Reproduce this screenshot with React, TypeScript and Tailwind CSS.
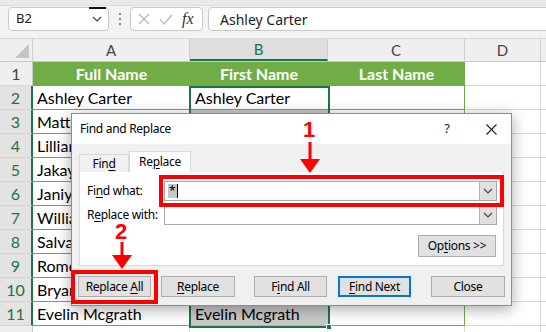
import React from "react";

const colW = [33, 157, 138, 137, 76, 5];

const names = [
  "Ashley Carter",
  "Matthew Hughes",
  "Lillian Brooks",
  "Jakayla Reed",
  "Janiya Flores",
  "William Ortiz",
  "Salvador Diaz",
  "Romeo Lopez",
  "Bryan Howard",
  "Evelin Mcgrath",
];

function Chevron({ className = "" }: { className?: string }) {
  return (
    <svg width="10" height="6" viewBox="0 0 10 6" className={className}>
      <path d="M1 1 L5 5 L9 1" fill="none" stroke="#444" strokeWidth="1.2" />
    </svg>
  );
}

function TopBar() {
  return (
    <div className="relative h-[39px] bg-[#f3f3f3] border-b border-[#dadada]">
      <div className="h-[6px] bg-[#e9e9e9] border-b border-[#dcdcdc]" />
      <div className="absolute left-[8px] top-[7px] flex items-center gap-0">
        <div className="relative w-[101px] h-[24px] bg-white border border-[#c9c9c9] rounded-[4px] flex items-center pl-[7px] pr-[6px] justify-between">
          <span className="text-[13px] text-[#222]">B2</span>
          <Chevron />
          <div className="absolute right-[2px] top-[-1px] w-[17px] h-[2px] bg-[#111]" />
        </div>
        <div className="w-[21px] flex flex-col items-center gap-[3px]">
          <div className="w-[2px] h-[2px] bg-[#888]" />
          <div className="w-[2px] h-[2px] bg-[#888]" />
          <div className="w-[2px] h-[2px] bg-[#888]" />
        </div>
        <div className="w-[73px] h-[24px] bg-white border border-[#c9c9c9] rounded-[4px] flex items-center pl-[7px] gap-[9px]">
          <svg width="12" height="12" viewBox="0 0 12 12">
            <path d="M1 1 L11 11 M11 1 L1 11" stroke="#b8b8b8" strokeWidth="1.2" />
          </svg>
          <svg width="14" height="11" viewBox="0 0 14 11">
            <path d="M1 5 L5 10 L13 1" fill="none" stroke="#b8b8b8" strokeWidth="1.2" />
          </svg>
          <span className="font-['Liberation_Serif',serif] italic text-[16px] text-[#333] leading-none">fx</span>
        </div>
        <div className="ml-[5px] w-[340px] h-[24px] bg-white border border-[#c9c9c9] rounded-l-[4px] flex items-center pl-[11px]">
          <span className="text-[14px] text-[#222]">Ashley Carter</span>
        </div>
      </div>
    </div>
  );
}

function HeaderRow() {
  const letters = ["A", "B", "C", "D"];
  return (
    <div className="flex h-[23px] bg-[#efefef] border-b border-[#c8c8c8]">
      <div className="relative w-[33px] h-full border-r border-[#d0d0d0]">
        <div className="absolute right-[3px] bottom-[3px] w-0 h-0 border-l-[14px] border-l-transparent border-b-[14px] border-b-[#c4c4c4]" />
      </div>
      {letters.map((l, i) => {
        const sel = l === "B";
        return (
          <div
            key={l}
            style={{ width: colW[i + 1] }}
            className={
              sel
                ? "h-full flex items-center justify-center bg-[#dedede] border-r border-[#d0d0d0] border-b-2 border-b-[#217346] text-[15px] text-[#217346]"
                : "h-full flex items-center justify-center border-r border-[#d0d0d0] text-[15px] text-[#444]"
            }
          >
            {l}
          </div>
        );
      })}
      <div className="flex-1" />
    </div>
  );
}

function DataRow({ n }: { n: number }) {
  const header = n === 1;
  const name = names[n - 2];
  return (
    <div className="flex h-[24px]">
      <div
        className={
          header
            ? "w-[33px] h-full flex items-center justify-center bg-[#efefef] border-r border-[#c8c8c8] border-b border-b-[#d6d6d6] text-[16px] text-[#444]"
            : "w-[33px] h-full flex items-center justify-center bg-[#e3e3e3] border-r-2 border-r-[#217346] border-b border-b-[#d2d2d2] text-[16px] text-[#217346]"
        }
      >
        {n}
      </div>
      {header ? (
        <>
          <div className="w-[157px] h-full flex items-center justify-center bg-[#70ad47] border-b border-[#70ad47] text-white font-bold text-[16px]">
            Full Name
          </div>
          <div className="w-[138px] h-full flex items-center justify-center bg-[#70ad47] border-b border-[#70ad47] text-white font-bold text-[16px]">
            First Name
          </div>
          <div className="w-[137px] h-full flex items-center justify-center bg-[#70ad47] border-b border-[#70ad47] text-white font-bold text-[16px]">
            Last Name
          </div>
        </>
      ) : (
        <>
          <div className="w-[157px] h-full flex items-center pl-[4px] border-b border-[#70ad47] border-r border-r-[#70ad47] text-[16px] text-black whitespace-nowrap overflow-hidden">
            {name}
          </div>
          <div
            className={
              n === 2
                ? "w-[138px] h-full flex items-center pl-[5px] bg-white border-b border-[#70ad47] text-[16px] text-black whitespace-nowrap overflow-hidden"
                : "w-[138px] h-full flex items-center pl-[5px] bg-[#c9c9c9] border-b border-[#b5b5b5] text-[16px] text-black whitespace-nowrap overflow-hidden"
            }
          >
            {name}
          </div>
          <div className="w-[137px] h-full border-b border-[#70ad47] border-r border-r-[#70ad47]" />
        </>
      )}
      <div className="w-[76px] h-full border-b border-[#d9d9d9] border-r border-r-[#d9d9d9]" />
      <div className="flex-1 h-full border-b border-[#d9d9d9]" />
    </div>
  );
}

function U({ children }: { children: React.ReactNode }) {
  return <span className="underline underline-offset-2 decoration-1">{children}</span>;
}

function Btn({
  children,
  className = "",
  blue = false,
}: {
  children: React.ReactNode;
  className?: string;
  blue?: boolean;
}) {
  return (
    <div
      className={
        (blue
          ? "border-2 border-[#0078d7] "
          : "border border-[#adadad] ") +
        "h-[21px] bg-[#e1e1e1] flex items-center justify-center text-[12px] tracking-[-0.3px] text-black " +
        className
      }
    >
      {children}
    </div>
  );
}

function Combo({ children }: { children?: React.ReactNode }) {
  return (
    <div className="w-[333px] h-[20px] bg-white border border-[#a8a8a8] flex items-center">
      <div className="flex-1 flex items-center pl-[3px]">{children}</div>
      <div className="w-[17px] h-full bg-[#e1e1e1] border-l border-[#b5b5b5] flex items-center justify-center">
        <Chevron />
      </div>
    </div>
  );
}

function Dialog() {
  return (
    <div className="absolute left-[71px] top-[113px] w-[441px] h-[193px] bg-[#f0f0f0] border border-[#8e8e8e] shadow-[0_3px_14px_rgba(0,0,0,0.35)] flex flex-col font-['Noto_Sans',sans-serif]">
      <div className="h-[30px] bg-white flex items-center pl-[8px] pr-[14px]">
        <span className="text-[12px] tracking-[-0.3px] text-black">Find and Replace</span>
        <span className="ml-auto text-[13px] text-[#222]">?</span>
        <svg width="11" height="11" viewBox="0 0 11 11" className="ml-[36px]">
          <path d="M0.5 0.5 L10.5 10.5 M10.5 0.5 L0.5 10.5" stroke="#222" strokeWidth="1.1" />
        </svg>
      </div>
      <div className="flex-1 flex flex-col pl-[7px]">
        <div className="flex items-end h-[28px]">
          <div className="w-[50px] h-[18px] border border-b-0 border-[#d9d9d9] flex items-center justify-center text-[12px] tracking-[-0.3px] text-black">
            <span>
              Fin<U>d</U>
            </span>
          </div>
          <div className="w-[62px] h-[21px] bg-white border border-b-0 border-[#d9d9d9] flex items-center justify-center text-[12px] tracking-[-0.3px] text-black">
            <span>
              Re<U>p</U>lace
            </span>
          </div>
        </div>
        <div className="w-[425px] h-[94px] bg-white border border-t-0 border-[#d9d9d9] flex flex-col pt-[9px] pl-[7px]">
          <div className="flex items-center h-[20px]">
            <span className="w-[77px] text-[12px] tracking-[-0.3px] text-black">
              Fi<U>n</U>d what:
            </span>
            <Combo>
              <span className="bg-[#c8c8c8] text-[12px] leading-[14px] px-[1px]">*</span>
              <span className="w-[1px] h-[14px] bg-black" />
            </Combo>
          </div>
          <div className="flex items-center h-[20px] mt-[4px]">
            <span className="w-[77px] text-[12px] tracking-[-0.3px] text-black">
              R<U>e</U>place with:
            </span>
            <Combo />
          </div>
          <div className="flex justify-end pr-[7px] mt-[10px]">
            <Btn className="w-[78px] h-[22px]">
              <span>
                Op<U>t</U>ions &gt;&gt;
              </span>
            </Btn>
          </div>
        </div>
        <div className="flex items-center mt-[10px]">
          <Btn className="w-[73px] ml-[-1px]">
            <span>
              Replace <U>A</U>ll
            </span>
          </Btn>
          <Btn className="w-[74px] ml-[10px]">
            <span>
              <U>R</U>eplace
            </span>
          </Btn>
          <Btn className="w-[73px] ml-[19px]">
            <span>
              F<U>i</U>nd All
            </span>
          </Btn>
          <Btn blue className="w-[73px] ml-[11px]">
            <span>
              <U>F</U>ind Next
            </span>
          </Btn>
          <Btn className="w-[74px] ml-[20px]">Close</Btn>
        </div>
      </div>
    </div>
  );
}

function Arrow({ left, top, h }: { left: number; top: number; h: number }) {
  return (
    <svg
      width="22"
      height={h}
      viewBox={`0 0 22 ${h}`}
      className="absolute"
      style={{ left, top }}
    >
      <rect x="9.5" y="0" width="3" height={h - 12} fill="#ff0000" />
      <path d={`M1 ${h - 14} L21 ${h - 14} L11 ${h} Z`} fill="#ff0000" />
    </svg>
  );
}

export default function App() {
  return (
    <div className="relative w-[546px] h-[332px] overflow-hidden bg-white font-['Lato',sans-serif]">
      <div className="font-['Noto_Sans',sans-serif]">
        <TopBar />
      </div>
      <HeaderRow />
      {Array.from({ length: 11 }, (_, i) => (
        <DataRow key={i} n={i + 1} />
      ))}
      <div className="flex h-[10px]">
        <div className="w-[33px] h-full bg-[#efefef] border-r border-[#c8c8c8]" />
        <div className="w-[157px] h-full border-r border-[#d9d9d9]" />
        <div className="w-[138px] h-full border-r border-[#d9d9d9]" />
        <div className="w-[137px] h-full border-r border-[#d9d9d9]" />
        <div className="w-[76px] h-full border-r border-[#d9d9d9]" />
      </div>

      {/* selection outline B2:B11 */}
      <div className="absolute left-[189px] top-[86px] w-[141px] h-[242px] border-2 border-[#217346] pointer-events-none" />
      <div className="absolute left-[326px] top-[324px] w-[6px] h-[6px] bg-[#217346] border border-white" />

      <Dialog />

      {/* annotations */}
      <div className="absolute left-[159px] top-[175px] w-[345px] h-[32px] border-4 border-[#ff0000]" />
      <div className="absolute left-[71px] top-[270px] w-[87px] h-[34px] border-4 border-[#ff0000]" />
      <div className="absolute left-[303px] top-[118px] text-[22px] leading-[24px] font-bold text-[#ff0000] font-['Liberation_Sans',sans-serif]">
        1
      </div>
      <Arrow left={299} top={142} h={31} />
      <div className="absolute left-[115px] top-[220px] text-[22px] leading-[24px] font-bold text-[#ff0000] font-['Liberation_Sans',sans-serif]">
        2
      </div>
      <Arrow left={111} top={242} h={27} />
    </div>
  );
}
